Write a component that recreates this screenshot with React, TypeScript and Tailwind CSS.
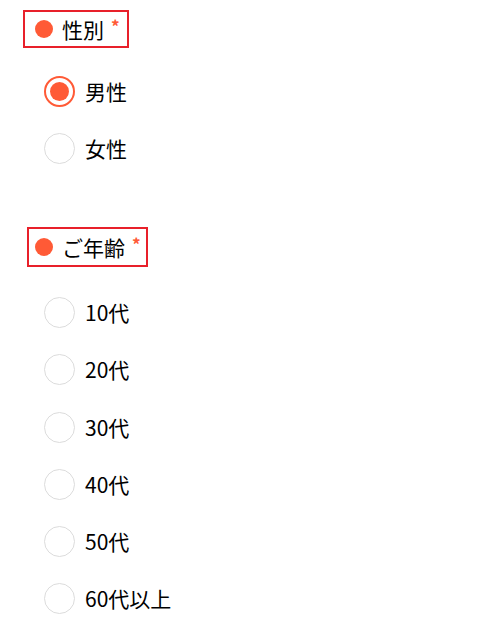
import { useState } from 'react';

const font = { fontFamily: '"Noto Sans CJK JP", "Noto Sans", sans-serif' };

function SectionLabel({ text, className }: { text: string; className: string }) {
    return (
        <div className={`inline-flex items-center border-2 border-[#e8202a] ${className}`}>
            <span className="w-[18px] h-[18px] rounded-full bg-[#ff5a36]" />
            <span className="ml-[9px] text-[21px] text-black leading-none">{text}</span>
            <span className="ml-[7px] -mt-[8px] text-[17px] font-bold text-[#ff5a36] leading-none">*</span>
        </div>
    );
}

function Radio({ label, checked, onClick }: { label: string; checked: boolean; onClick: () => void }) {
    return (
        <button onClick={onClick} className="flex items-center h-[57.25px] pl-[44px] w-full text-left">
            <span
                className={
                    checked
                        ? 'w-[31px] h-[31px] rounded-full border-2 border-[#ff5a36] flex items-center justify-center'
                        : 'w-[31px] h-[31px] rounded-full border-[1.5px] border-[#dcdcdc]'
                }
            >
                {checked && <span className="w-[19px] h-[19px] rounded-full bg-[#ff5a36]" />}
            </span>
            <span className="ml-[10px] text-[21px] text-black leading-none">{label}</span>
        </button>
    );
}

export default function App() {
    const [gender, setGender] = useState('男性');
    const [age, setAge] = useState<string | null>(null);
    const ages = ['10代', '20代', '30代', '40代', '50代', '60代以上'];

    return (
        <div className="bg-white min-h-[641px] pt-[10px]" style={font}>
            {/* 性別 */}
            <div className="pl-[23px]">
                <SectionLabel text="性別" className="h-[38px] pl-[10px] pr-[7px]" />
            </div>
            <div className="mt-[14.5px]">
                {['男性', '女性'].map((g) => (
                    <Radio key={g} label={g} checked={gender === g} onClick={() => setGender(g)} />
                ))}
            </div>

            {/* ご年齢 */}
            <div className="pl-[27px] mt-[50px]">
                <SectionLabel text="ご年齢" className="h-[40px] pl-[6px] pr-[5px]" />
            </div>
            <div className="mt-[17px]">
                {ages.map((a) => (
                    <Radio key={a} label={a} checked={age === a} onClick={() => setAge(a)} />
                ))}
            </div>
        </div>
    );
}
